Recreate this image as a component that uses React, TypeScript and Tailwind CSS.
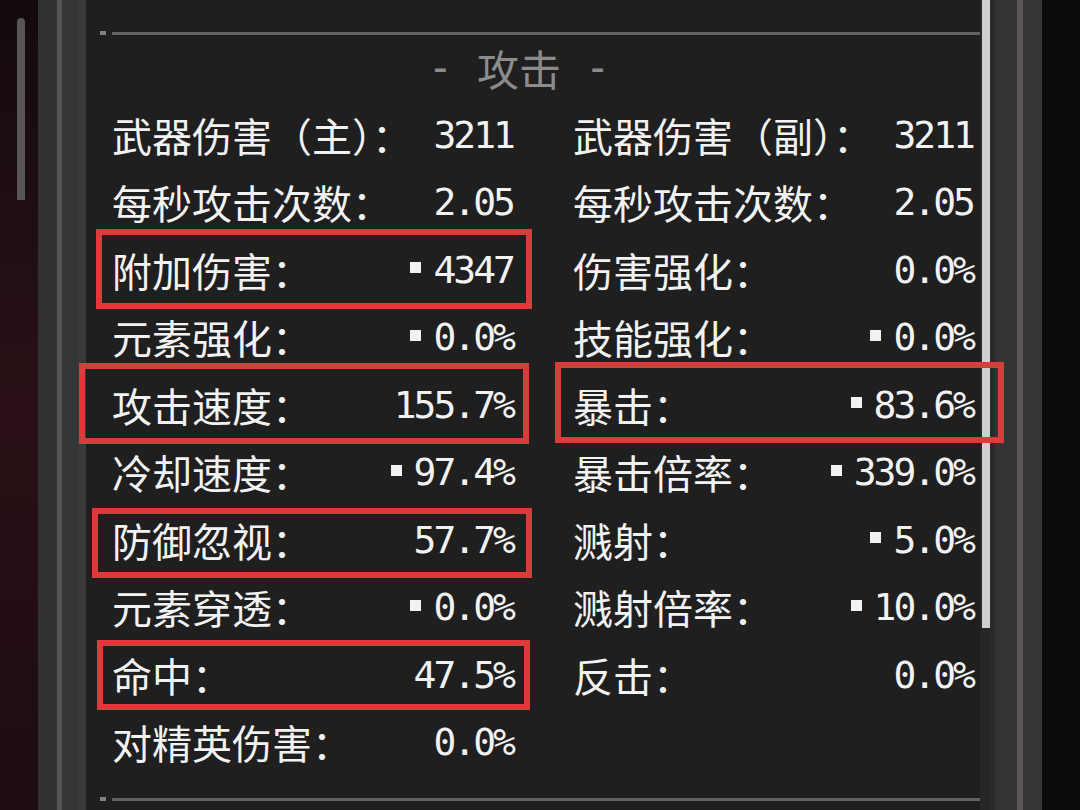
import React from "react";

type Stat = { label: string; value: string; mark?: boolean };

const CJK = "font-['Noto_Sans_CJK_SC','Noto_Sans',sans-serif]";
const MONO = "font-['DejaVu_Sans_Mono','Liberation_Mono',monospace]";

const rows: [Stat, Stat | null][] = [
  [
    { label: "武器伤害（主）：", value: "3211" },
    { label: "武器伤害（副）：", value: "3211" },
  ],
  [
    { label: "每秒攻击次数：", value: "2.05" },
    { label: "每秒攻击次数：", value: "2.05" },
  ],
  [
    { label: "附加伤害：", value: "4347", mark: true },
    { label: "伤害强化：", value: "0.0%" },
  ],
  [
    { label: "元素强化：", value: "0.0%", mark: true },
    { label: "技能强化：", value: "0.0%", mark: true },
  ],
  [
    { label: "攻击速度：", value: "155.7%" },
    { label: "暴击：", value: "83.6%", mark: true },
  ],
  [
    { label: "冷却速度：", value: "97.4%", mark: true },
    { label: "暴击倍率：", value: "339.0%", mark: true },
  ],
  [
    { label: "防御忽视：", value: "57.7%" },
    { label: "溅射：", value: "5.0%", mark: true },
  ],
  [
    { label: "元素穿透：", value: "0.0%", mark: true },
    { label: "溅射倍率：", value: "10.0%", mark: true },
  ],
  [
    { label: "命中：", value: "47.5%" },
    { label: "反击：", value: "0.0%" },
  ],
  [{ label: "对精英伤害：", value: "0.0%" }, null],
];

// red highlight frames drawn on top of the sheet
const marks = [
  "left-[96px] top-[229px] w-[436px] h-[80px]",
  "left-[79px] top-[363px] w-[450px] h-[81px]",
  "left-[555px] top-[362px] w-[449px] h-[81px]",
  "left-[92px] top-[508px] w-[440px] h-[70px]",
  "left-[97px] top-[640px] w-[433px] h-[70px]",
];

function Divider() {
  return (
    <div className="flex items-center pl-[14px]">
      <span className="h-[4px] w-[6px] bg-[#808080]" />
      <span className="ml-[6px] h-[3px] flex-1 bg-[#626262]" />
    </div>
  );
}

function StatCell({ stat }: { stat: Stat | null }) {
  if (!stat) return <div className="h-[67.5px]" />;
  return (
    <div className="flex h-[67.5px] items-center justify-between text-[#f2f2f2]">
      <span className={`${CJK} text-[40px] leading-none`}>{stat.label}</span>
      <span className="flex items-center">
        {stat.mark && <span className="mr-[12px] -mt-[4px] h-[11px] w-[11px] bg-[#f2f2f2]" />}
        <span className={`${MONO} mr-[2px] text-[38px] leading-none tracking-[-3px]`}>{stat.value}</span>
      </span>
    </div>
  );
}

export default function App() {
  return (
    <div className="relative flex h-[810px] w-[1080px] overflow-hidden bg-black">
      {/* backdrop + outer scrollbar */}
      <div className="w-[38px] bg-linear-to-b from-[#130a0e] via-[#2a1016] to-[#1d0b10] pl-[17px] pt-[18px]">
        <div className="h-[182px] w-[8px] rounded-t-full bg-[#575455]" />
      </div>

      {/* left frame */}
      <div className="flex">
        <div className="w-[19px] bg-[#303232]" />
        <div className="w-[5px] bg-[#555353]" />
        <div className="w-[16px] bg-[#333536]" />
        <div className="w-[8px] bg-[#3a3a3a]" />
      </div>

      {/* stats sheet */}
      <div className="flex w-[894px] flex-col bg-[#1f1f1f] pt-[31px]">
        <Divider />
        <div className="flex h-[66px] items-center justify-center pr-[28px] text-[#8c8c8c]">
          <span className={`${MONO} text-[42px] leading-none`}>-</span>
          <span className={`${CJK} mx-[24px] text-[42px] leading-none`}>攻击</span>
          <span className={`${MONO} text-[42px] leading-none`}>-</span>
        </div>
        <div className="grid grid-cols-[403px_402px] gap-x-[58px] pl-[26px]">
          {rows.map(([l, r], i) => (
            <React.Fragment key={i}>
              <StatCell stat={l} />
              <StatCell stat={r} />
            </React.Fragment>
          ))}
        </div>
        <div className="mt-[21px]">
          <Divider />
        </div>
      </div>

      {/* sheet scrollbar */}
      <div className="flex w-[10px] flex-col bg-[#262626]">
        <div className="ml-[2px] h-[628px] w-[8px] bg-[#cfcfcf]" />
      </div>

      {/* right frame */}
      <div className="flex">
        <div className="w-[5px] bg-[#2a2a2a]" />
        <div className="w-[22px] bg-[#333333]" />
        <div className="w-[6px] bg-[#5a5656]" />
        <div className="w-[19px] bg-[#343636]" />
      </div>
      <div className="flex-1 bg-[#0c0c0c]" />

      {marks.map((m) => (
        <div key={m} className={`pointer-events-none absolute border-[6px] border-[#da3c3c] ${m}`} />
      ))}
    </div>
  );
}
